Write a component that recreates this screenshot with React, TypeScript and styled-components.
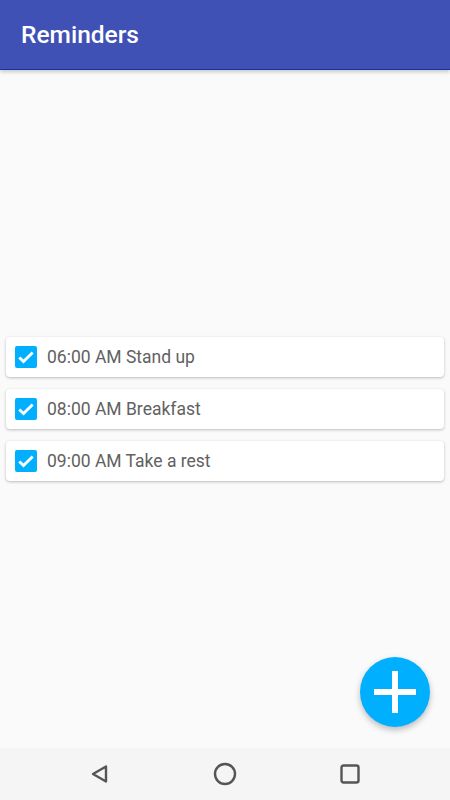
import styled, { createGlobalStyle } from "styled-components";

const GlobalStyle = createGlobalStyle`
  html, body {
    margin: 0;
    padding: 0;
    background: #fafafa;
    font-family: Roboto, "Liberation Sans", sans-serif;
  }
`;

const StyledScreen = styled.div`
  position: relative;
  display: flex;
  flex-direction: column;
  width: 450px;
  height: 800px;
  overflow: hidden;
  background: #fafafa;
`;

const StyledAppBar = styled.header`
  display: flex;
  align-items: center;
  height: 69px;
  padding: 0 21px;
  background: #3f51b5;
  border-bottom: 1px solid #1a2fa0;
  box-shadow: 0 2px 4px rgba(0, 0, 0, 0.2);
  z-index: 1;

  h1 {
    margin: 0;
    color: #fff;
    font-size: 24.5px;
    font-weight: 500;
  }
`;

const StyledContent = styled.main`
  flex: 1;
  display: flex;
  flex-direction: column;
  justify-content: center;
  gap: 12px;
  padding: 0 6px;
`;

const StyledCard = styled.div`
  display: flex;
  align-items: center;
  gap: 10px;
  height: 40px;
  padding: 0 9px;
  background: #fff;
  border-radius: 4px;
  box-shadow: 0 1px 3px rgba(0, 0, 0, 0.25);
  color: #616161;
  font-size: 17.5px;
`;

const StyledCheckbox = styled.span`
  display: flex;
  align-items: center;
  justify-content: center;
  width: 22px;
  height: 22px;
  border-radius: 2px;
  background: #00b0ff;
`;

const StyledFab = styled.button`
  position: absolute;
  right: 20px;
  bottom: 73px;
  display: flex;
  align-items: center;
  justify-content: center;
  width: 70px;
  height: 70px;
  padding: 0;
  border: none;
  border-radius: 50%;
  background: #00b0ff;
  box-shadow: 0 3px 6px rgba(0, 0, 0, 0.25);
`;

const StyledNavBar = styled.nav`
  display: flex;
  align-items: center;
  justify-content: space-between;
  height: 52px;
  padding: 0 89px;
  background: #f5f5f5;

  svg {
    display: block;
  }
`;

const reminders = [
  "06:00 AM Stand up",
  "08:00 AM Breakfast",
  "09:00 AM Take a rest",
];

export default function App() {
  return (
    <>
      <GlobalStyle />
      <StyledScreen>
        <StyledAppBar>
          <h1>Reminders</h1>
        </StyledAppBar>
        <StyledContent>
          {reminders.map((text, i) => (
            <StyledCard key={`reminder-${i}`}>
              <StyledCheckbox>
                <svg width="20" height="20" viewBox="0 0 24 24">
                  <path
                    d="M4 12.5l5 5L20 6.5"
                    fill="none"
                    stroke="#fff"
                    strokeWidth="3.4"
                  />
                </svg>
              </StyledCheckbox>
              <span>{text}</span>
            </StyledCard>
          ))}
        </StyledContent>
        <StyledFab>
          <svg width="42" height="42" viewBox="0 0 42 42">
            <path d="M21 0v42M0 21h42" stroke="#fff" strokeWidth="6" />
          </svg>
        </StyledFab>
        <StyledNavBar>
          <svg width="22" height="22" viewBox="0 0 22 22">
            <path
              d="M17 3.5L4 11l13 7.5z"
              fill="none"
              stroke="#555"
              strokeWidth="2.4"
              strokeLinejoin="round"
            />
          </svg>
          <svg width="24" height="24" viewBox="0 0 24 24">
            <circle cx="12" cy="12" r="10" fill="none" stroke="#555" strokeWidth="2.4" />
          </svg>
          <svg width="22" height="22" viewBox="0 0 22 22">
            <rect
              x="2.5"
              y="2.5"
              width="17"
              height="17"
              rx="2"
              fill="none"
              stroke="#555"
              strokeWidth="2.4"
            />
          </svg>
        </StyledNavBar>
      </StyledScreen>
    </>
  );
}
